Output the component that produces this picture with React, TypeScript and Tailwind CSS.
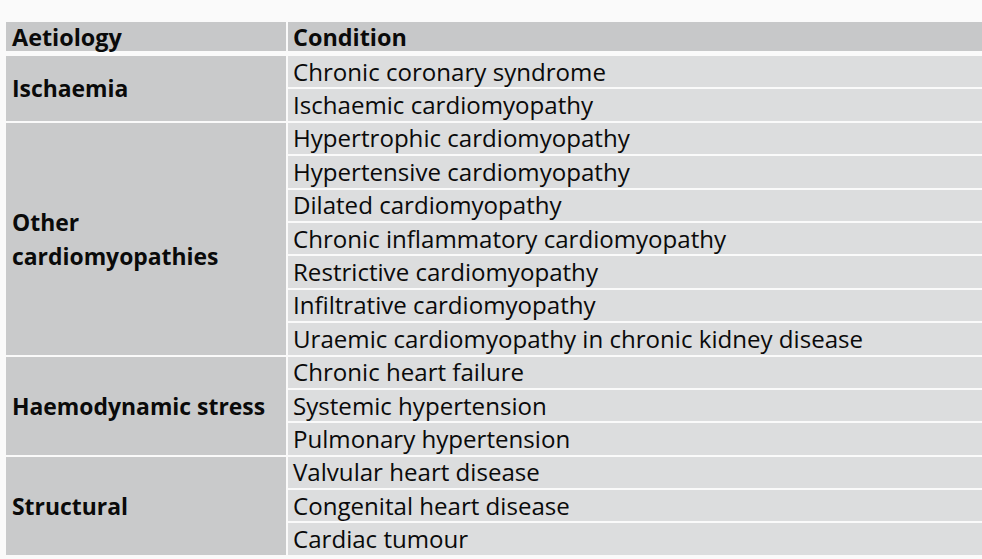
const groups: { aetiology: string[]; conditions: string[] }[] = [
  {
    aetiology: ["Ischaemia"],
    conditions: ["Chronic coronary syndrome", "Ischaemic cardiomyopathy"],
  },
  {
    aetiology: ["Other", "cardiomyopathies"],
    conditions: [
      "Hypertrophic cardiomyopathy",
      "Hypertensive cardiomyopathy",
      "Dilated cardiomyopathy",
      "Chronic inflammatory cardiomyopathy",
      "Restrictive cardiomyopathy",
      "Infiltrative cardiomyopathy",
      "Uraemic cardiomyopathy in chronic kidney disease",
    ],
  },
  {
    aetiology: ["Haemodynamic stress"],
    conditions: [
      "Chronic heart failure",
      "Systemic hypertension",
      "Pulmonary hypertension",
    ],
  },
  {
    aetiology: ["Structural"],
    conditions: [
      "Valvular heart disease",
      "Congenital heart disease",
      "Cardiac tumour",
    ],
  },
];

export default function App() {
  return (
    <div
      className="h-[559px] w-[982px] overflow-hidden bg-[#fafafa] pl-[6px] pt-[22px] text-[#0a0a0a]"
      style={{ fontFamily: '"Open Sans", "Lato", sans-serif' }}
    >
      {/* Header */}
      <div className="mb-[5px] flex h-[29px] gap-[2px] text-[23.4px] font-bold leading-[31px]">
        <div className="w-[280px] bg-[#c7c8c9] pl-[6px]">Aetiology</div>
        <div className="flex-1 bg-[#c7c8c9] pl-[5px]">Condition</div>
      </div>

      <div className="flex flex-col gap-[2px]">
        {groups.map((g) => (
          <div key={g.aetiology.join(" ")} className="flex gap-[2px]">
            <div className="flex w-[280px] flex-col justify-center bg-[#c9cacb] pl-[6px] pt-[2px] text-[22.9px] font-bold leading-[34px]">
              {g.aetiology.map((line) => (
                <span key={line}>{line}</span>
              ))}
            </div>
            <div className="flex flex-1 flex-col gap-[2px] text-[24.1px]">
              {g.conditions.map((c) => (
                <div
                  key={c}
                  className="flex h-[31.4px] items-center bg-[#dcddde] pl-[5px]"
                >
                  {c}
                </div>
              ))}
            </div>
          </div>
        ))}
      </div>
    </div>
  );
}
